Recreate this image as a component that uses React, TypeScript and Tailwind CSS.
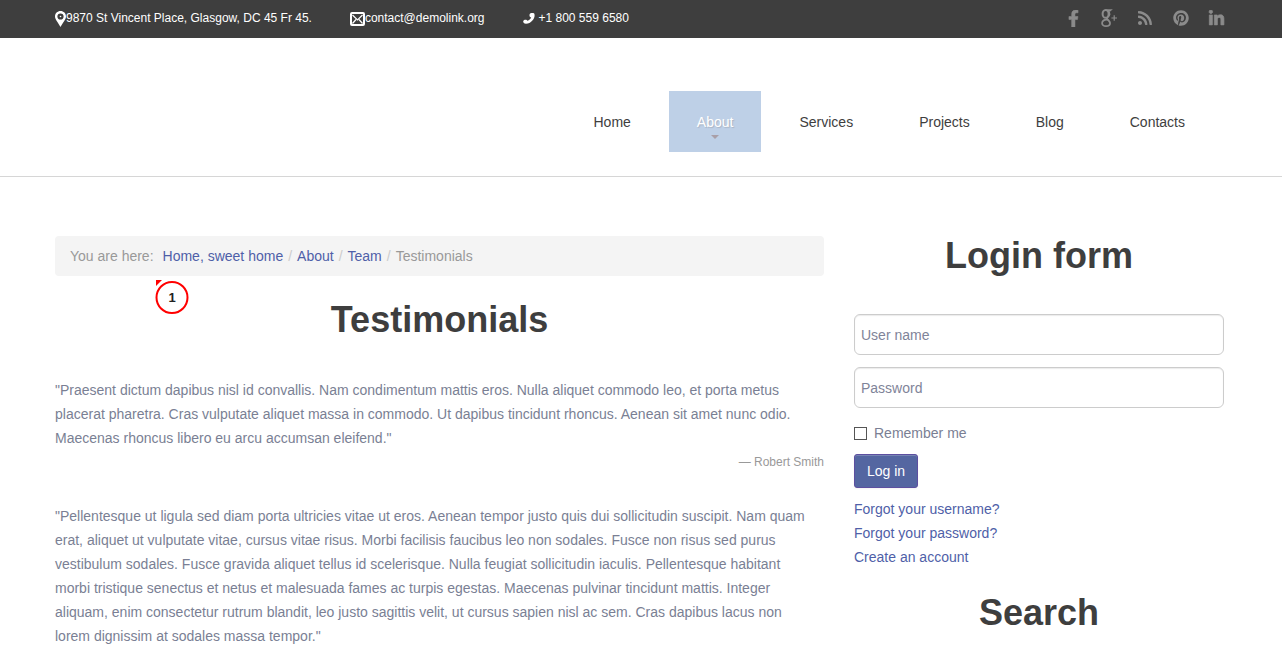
import React from 'react';
import { FaFacebookF, FaRss, FaPinterest, FaLinkedinIn } from 'react-icons/fa';

const navItems = ['Home', 'About', 'Services', 'Projects', 'Blog', 'Contacts'];

const breadcrumbs = ['Home, sweet home', 'About', 'Team'];

const GooglePlusIcon = () => (
  <svg width="17" height="18" viewBox="0 0 17 18" fill="none" stroke="currentColor">
    <ellipse cx="4.6" cy="4.9" rx="3" ry="3.9" strokeWidth="2" />
    <path d="M4.5 0.9H10.2L9 1.9H7" strokeWidth="1.2" />
    <path d="M7.2 1.8C9.6 4.4 8.6 6.8 6.6 8.2 5.2 9.2 5.8 9.8 7.4 11.2 9 12.6 9.2 13.6 8.8 14.8" strokeWidth="1.8" />
    <path d="M6.8 10.8C3.4 10.4 1.2 11.6 1.1 14 1 16.2 2.8 17.1 5 17.1 7.2 17.1 9 16.2 9 14.2" strokeWidth="1.8" />
    <path d="M10.4 9H16M13.2 6.2V11.8" strokeWidth="1.2" />
  </svg>
);

const socials = [
  { label: 'Facebook', icon: <FaFacebookF size={17} stroke="currentColor" strokeWidth={16} /> },
  { label: 'Google Plus', icon: <GooglePlusIcon /> },
  { label: 'RSS', icon: <FaRss size={16} /> },
  { label: 'Pinterest', icon: <FaPinterest size={16} /> },
  { label: 'LinkedIn', icon: <FaLinkedinIn size={17} stroke="currentColor" strokeWidth={20} /> },
];

const testimonials = [
  {
    text: '"Praesent dictum dapibus nisl id convallis. Nam condimentum mattis eros. Nulla aliquet commodo leo, et porta metus placerat pharetra. Cras vulputate aliquet massa in commodo. Ut dapibus tincidunt rhoncus. Aenean sit amet nunc odio. Maecenas rhoncus libero eu arcu accumsan eleifend."',
    author: 'Robert Smith',
  },
  {
    text: '"Pellentesque ut ligula sed diam porta ultricies vitae ut eros. Aenean tempor justo quis dui sollicitudin suscipit. Nam quam erat, aliquet ut vulputate vitae, cursus vitae risus. Morbi facilisis faucibus leo non sodales. Fusce non risus sed purus vestibulum sodales. Fusce gravida aliquet tellus id scelerisque. Nulla feugiat sollicitudin iaculis. Pellentesque habitant morbi tristique senectus et netus et malesuada fames ac turpis egestas. Maecenas pulvinar tincidunt mattis. Integer aliquam, enim consectetur rutrum blandit, leo justo sagittis velit, ut cursus sapien nisl ac sem. Cras dapibus lacus non lorem dignissim at sodales massa tempor."',
    author: '',
  },
];

const PinIcon = () => (
  <svg width="11" height="16" viewBox="0 0 11 16" fill="none" className="mt-0.5">
    <path
      fillRule="evenodd"
      fill="#fff"
      d="M5.5 0C2.4 0 0 2.4 0 5.4 0 8.6 3.2 11.4 5.5 16 7.8 11.4 11 8.6 11 5.4 11 2.4 8.6 0 5.5 0ZM5.5 2.4A3.1 3.1 0 1 1 5.5 8.6 3.1 3.1 0 0 1 5.5 2.4Z"
    />
    <circle cx="5.5" cy="5.5" r="0.8" fill="#fff" />
  </svg>
);

const MailIcon = () => (
  <svg width="15" height="14" viewBox="0 0 15 14" fill="none" className="mt-0.5">
    <rect x="1" y="1" width="13" height="12" rx="1" stroke="#fff" strokeWidth="2" />
    <path d="M2.5 3 7.5 8 12.5 3M2.5 11.5 6 7.5M12.5 11.5 9 7.5" stroke="#fff" strokeWidth="1.2" />
  </svg>
);

const PhoneIcon = () => (
  <svg width="12" height="11" viewBox="0 0 12 11" fill="#fff">
    <path d="M7.6 0.3C8.8 0 10.4 0 11.2 0.6 12 2 11.8 4.5 10.1 6.7 8.4 9 5.6 10.8 2.9 10.8 1.5 10.8 0.4 10 0.2 8.8 0.2 7.8 0.9 7.2 1.8 6.8 3 6.4 4 6.9 4.5 7.8 6 7.4 7.6 5.8 8.2 4.5 7 4.4 6.4 3.4 6.5 2.3 6.5 1.4 6.9 0.6 7.6 0.3Z" />
  </svg>
);

const Heading = ({ children }: { children: React.ReactNode }) => (
  <h2 className="text-center text-4xl leading-10 font-bold text-[#3e3e3e]">{children}</h2>
);

const TopBar = () => (
  <div className="bg-[#3e3e3e] text-white">
    <div className="mx-auto flex h-[38px] max-w-[1172px] items-center justify-between pr-[2px] pb-[2px] text-xs">
      <address className="flex items-center gap-[38px] not-italic">
        <span className="flex items-center">
          <PinIcon />
          9870 St Vincent Place, Glasgow, DC 45 Fr 45.
        </span>
        <a href="#contact" className="flex items-center">
          <MailIcon />
          contact@demolink.org
        </a>
        <span className="flex items-center gap-1">
          <PhoneIcon />
          +1 800 559 6580
        </span>
      </address>
      <div className="flex items-center text-[#8b8b8b]">
        {socials.map((social) => (
          <a
            key={social.label}
            href="#social"
            aria-label={social.label}
            className="flex w-9 items-center justify-center last:w-[26px] last:justify-end"
          >
            {social.icon}
          </a>
        ))}
      </div>
    </div>
  </div>
);

const Header = () => (
  <header className="border-b border-[#d6d6d6]">
    <div className="mx-auto max-w-[1172px] pt-[53px] pr-[14px] pb-6">
      <nav className="flex flex-wrap justify-end gap-[10px]">
        {navItems.map((item) => {
          const active = item === 'About';
          return (
            <a
              key={item}
              href="#nav"
              className={`relative px-7 pt-[19px] pb-[18px] ${
                active ? 'bg-[#bed0e7] text-white [text-shadow:1px_1px_1px_#a9b4c4]' : 'text-[#3e3e3e]'
              }`}
            >
              {item}
              {active && (
                <span className="absolute bottom-[13px] left-1/2 -translate-x-1/2 border-x-4 border-t-4 border-x-transparent border-t-[#a99fa8]" />
              )}
            </a>
          );
        })}
      </nav>
    </div>
  </header>
);

const Breadcrumb = () => (
  <div className="relative">
    <ul className="flex flex-wrap rounded bg-[#f4f4f4] px-[15px] py-2 text-[#999]">
      <li className="mr-[9px]">You are here:</li>
      {breadcrumbs.map((crumb) => (
        <li key={crumb}>
          <a href="#crumb" className="text-[#4f5fa8]">
            {crumb}
          </a>
          <span className="px-[5px] text-[#ccc]">/</span>
        </li>
      ))}
      <li>Testimonials</li>
    </ul>
    {/* numbered callout */}
    <div className="absolute top-full left-[100px] mt-1">
      <svg width="34" height="35" viewBox="0 0 34 35" className="absolute">
        <path d="M1 0H7L1 6Z" fill="#f00" />
        <circle cx="17" cy="17.5" r="15.5" fill="#fff" stroke="#f00" strokeWidth="2" />
      </svg>
      <span className="relative block h-[35px] w-[34px] text-center text-[13px] leading-[35px] font-bold text-[#222]">1</span>
    </div>
  </div>
);

const LoginForm = () => (
  <form onSubmit={(e) => e.preventDefault()}>
    <Heading>Login form</Heading>
    <div className="mt-[38px] flex flex-col gap-3">
      <input
        type="text"
        aria-label="User name"
        placeholder="User name"
        className="h-[41px] w-full rounded-md border border-[#ccc] px-1.5 shadow-[inset_0_1px_1px_rgba(0,0,0,0.08)] placeholder:text-[#7f8499]"
      />
      <input
        type="password"
        aria-label="Password"
        placeholder="Password"
        className="h-[41px] w-full rounded-md border border-[#ccc] px-1.5 shadow-[inset_0_1px_1px_rgba(0,0,0,0.08)] placeholder:text-[#7f8499]"
      />
    </div>
    <div className="mt-[13px] flex items-center gap-[7px]">
      <input
        id="remember"
        type="checkbox"
        className="h-[13px] w-[13px] appearance-none border border-[#555] bg-white checked:bg-[#5466a1]"
      />
      <label htmlFor="remember">Remember me</label>
    </div>
    <button
      type="submit"
      className="mt-[9px] block h-[34px] rounded-[3px] border border-[#5d4fa0] bg-[#5466a1] px-3 text-white shadow-[inset_0_1px_0_rgba(255,255,255,0.2),0_1px_2px_rgba(0,0,0,0.05)]"
    >
      Log in
    </button>
    <ul className="mt-[9px] text-[#4f5fa8]">
      <li><a href="#username">Forgot your username?</a></li>
      <li><a href="#password">Forgot your password?</a></li>
      <li><a href="#register">Create an account</a></li>
    </ul>
  </form>
);

export default function App() {
  return (
    <div className="bg-white font-['Liberation_Sans',Arial,sans-serif] text-sm leading-6 text-[#7a7f94]">
      <TopBar />
      <Header />
      <div className="mx-auto flex max-w-[1172px] flex-col gap-[30px] pt-[59px] pr-[3px] md:flex-row">
        <main className="min-w-0 flex-1">
          <Breadcrumb />
          <div className="mt-6 mb-[38px]">
            <Heading>Testimonials</Heading>
          </div>
          <div className="flex flex-col gap-[30px]">
            {testimonials.map((item) => (
              <blockquote key={item.text}>
                <p className="pr-[10px]">{item.text}</p>
                {item.author && (
                  <footer className="text-right text-xs leading-6 text-[#999]">— {item.author}</footer>
                )}
              </blockquote>
            ))}
          </div>
        </main>
        <aside className="flex flex-col gap-6 md:w-[370px]">
          <LoginForm />
          <Heading>Search</Heading>
        </aside>
      </div>
    </div>
  );
}
